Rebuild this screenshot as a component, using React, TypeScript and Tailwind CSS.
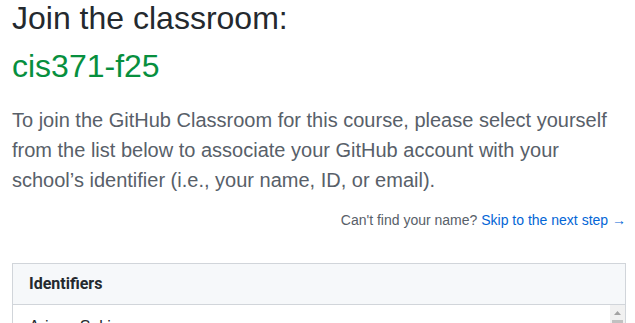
import React from "react";

export default function App() {
  return (
    <div
      className="w-[635px] h-[323px] overflow-hidden bg-white pl-3 pr-[9px]"
      style={{ fontFamily: '"Liberation Sans", Arial, sans-serif' }}
    >
      <h1 className="text-[32px] leading-[36px] font-normal text-[#24292e]">Join the classroom:</h1>
      <h2 className="mt-3 text-[32px] leading-[36px] font-normal text-[#078f3e]">cis371-f25</h2>
      <p className="mt-[21px] text-[20px] leading-[30px] text-[#586069]">
        To join the GitHub Classroom for this course, please select yourself from the list below to associate your
        GitHub account with your school’s identifier (i.e., your name, ID, or email).
      </p>
      <p className="mt-[15px] text-right text-[14px] leading-[21px] text-[#586069]">
        Can't find your name? <a className="text-[#0366d6]">Skip to the next step →</a>
      </p>
      <div className="mt-[32px] border border-[#d1d5da]">
        <div
          className="bg-[#f6f8fa] border-b border-[#d1d5da] px-4 py-2 text-[16px] leading-[24px] font-bold text-[#24292e]"
          style={{ fontFamily: "Roboto, sans-serif" }}
        >
          Identifiers
        </div>
        <div className="flex h-[200px]">
          <div className="flex-1 pl-4 pt-[10px]">
            <div className="text-[16px] leading-[24px] text-[#24292e]">Ariana Saki</div>
          </div>
          <div className="w-[15px] bg-[#f1f1f1] flex flex-col">
            <div className="h-[15px] flex items-center justify-center">
              <svg width="7" height="4" viewBox="0 0 7 4">
                <polygon points="3.5,0 7,4 0,4" fill="#a3a3a3" />
              </svg>
            </div>
            <div className="mx-[2px] h-[120px] bg-[#c1c1c1]" />
          </div>
        </div>
      </div>
    </div>
  );
}
